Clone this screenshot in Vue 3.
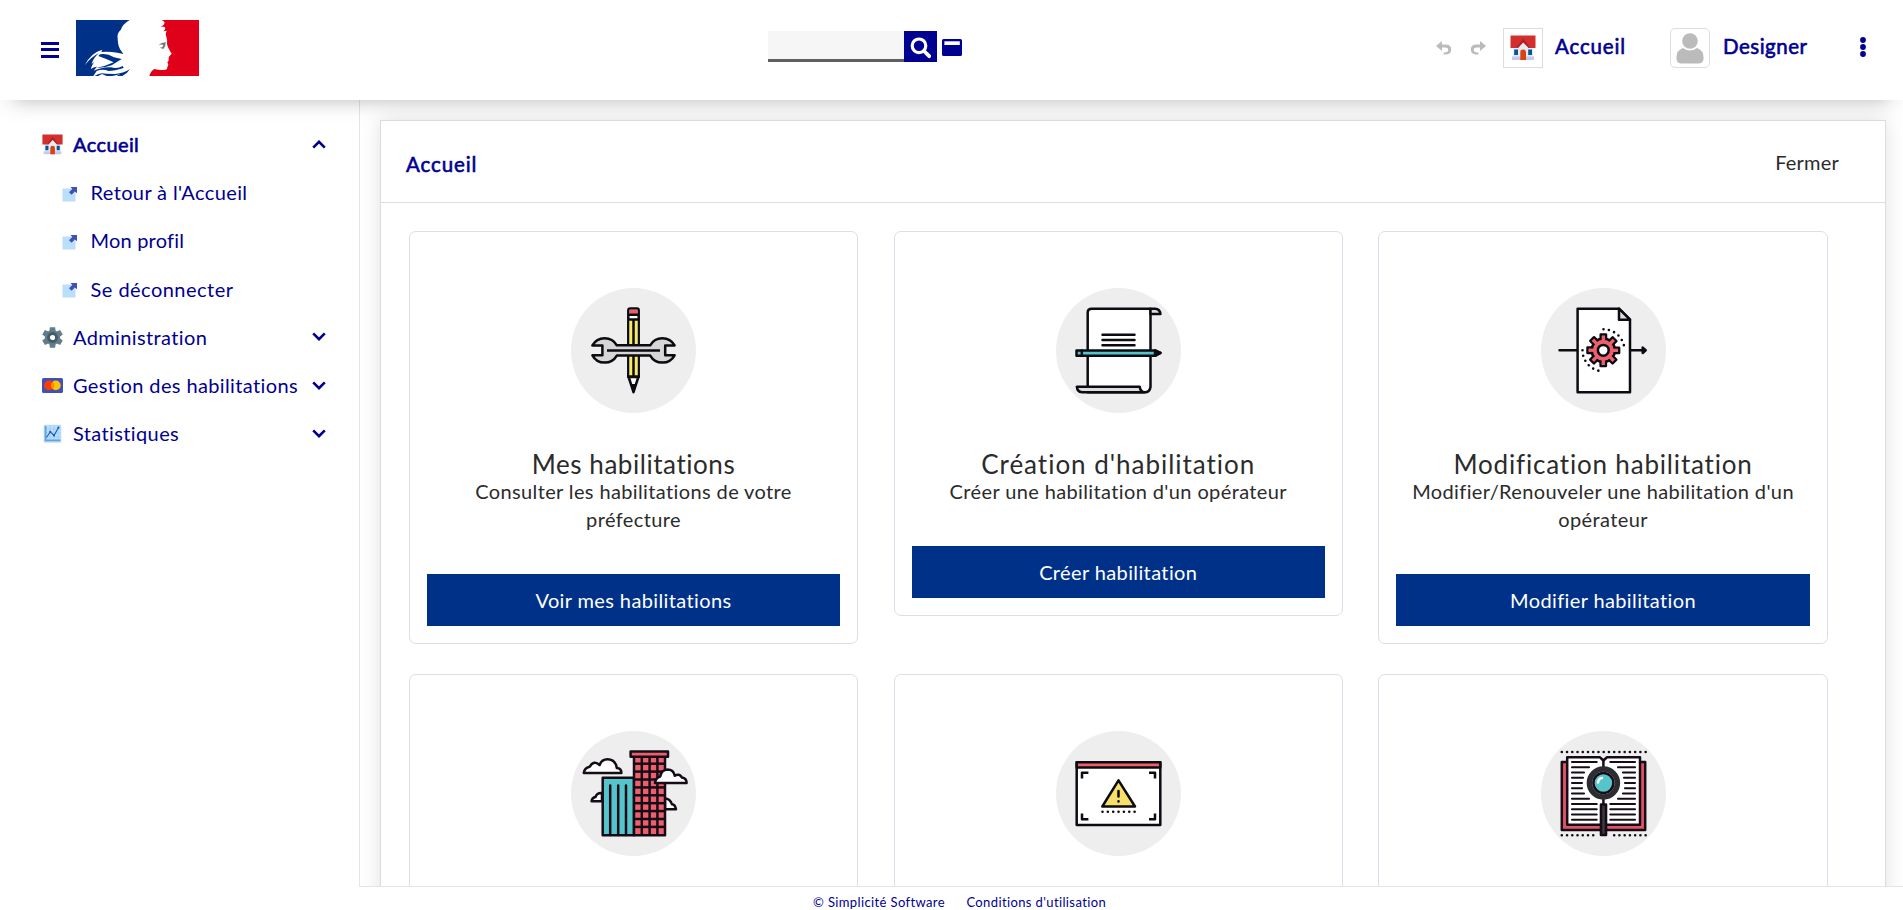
<script setup>
const subItems = [
  { label: "Retour à l'Accueil", cls: 's-retour' },
  { label: 'Mon profil', cls: 's-profil' },
  { label: 'Se déconnecter', cls: 's-deco' },
]
const menus = [
  { label: 'Administration', icon: 'gear' },
  { label: 'Gestion des habilitations', icon: 'card' },
  { label: 'Statistiques', icon: 'chart' },
]
const cards = [
  { icon: 'tools', title: 'Mes habilitations', size: 't1', text: 'Consulter les habilitations de votre préfecture', action: 'Voir mes habilitations' },
  { icon: 'scroll', title: "Création d'habilitation", size: 't2', text: "Créer une habilitation d'un opérateur", action: 'Créer habilitation' },
  { icon: 'process', title: 'Modification habilitation', size: 't3', text: "Modifier/Renouveler une habilitation d'un opérateur", action: 'Modifier habilitation' },
  { icon: 'city' },
  { icon: 'alert' },
  { icon: 'book' },
]
const gearTeeth = [0, 45, 90, 135, 180, 225, 270, 315]
const floors = [33.7, 41.6, 49.5, 57.4, 65.3, 73.2, 81.1, 89, 96.9]
const lines = [31, 36.2, 41.5, 46.7, 52, 57.2, 62.5, 67.7, 73, 78.2, 83.5, 88.7]
const leftEnds = [55.7, 48, 43, 42, 41, 41, 43, 48, 55.7, 55.7, 55.7, 55.7]
</script>

<template>
  <div class="app">
    <header class="top">
      <div class="brand">
        <div class="burger"><i></i><i></i><i></i></div>
        <svg class="logo" viewBox="228 60 369 168" preserveAspectRatio="none">
          <rect x="228" y="60" width="369" height="168" fill="#fff" />
          <path fill="#003189" d="M228 60H389Q368 72 362 90Q350 100 353 116Q354 142 364 153L370 162L352 158Q326 154 304 156L307 149Q274 157 254 196Q273 171 297 159Q280 173 275 192L283 186Q273 200 273 207Q279 201 291 200L281 212Q310 199 333 202Q353 207 368 198L371 204Q342 213 326 213Q307 206 290 213L280 228H228Z" />
          <path fill="#003189" d="M300 163Q320 158 342 172L365 177Q352 185 335 196Q311 205 290 203Q317 199 341 187Q318 176 295 168ZM284 228Q299 216 318 221L345 222Q374 219 390 207Q382 221 367 228H350L360 222Q340 230 320 228L306 222L294 228Z" />
          <path fill="#e1001a" d="M484 60H597V228H448Q452 213 463 207Q480 211 497 209Q503 207 502 201L505 194L502 187Q507 184 506 177Q505 170 509 168L515 161Q503 143 501 132Q503 120 497 102L500 92L490 94Q499 86 494 81L481 79Q492 77 494 68Q492 62 484 60Z" />
          <path fill="#777" d="M475 136Q485 126 498 127Q495 133 496 138L490 147L479 143Q489 143 490 135Q484 132 475 136Z" />
        </svg>
      </div>

      <div class="search">
        <div class="field"></div>
        <div class="go">
          <svg width="22" height="22" viewBox="0 0 22 22"><circle cx="9" cy="8.8" r="6.8" fill="none" stroke="#fff" stroke-width="3.2" /><path d="M14 14l5.2 5.2" stroke="#fff" stroke-width="3.8" stroke-linecap="round" /></svg>
        </div>
        <svg class="cardico" width="20" height="17" viewBox="0 0 20 17"><rect width="20" height="17" rx="1.6" fill="#000091" /><rect x="2.4" y="2.3" width="15.4" height="3.7" fill="#fff" /></svg>
      </div>

      <div class="tools">
        <svg class="undo" width="16" height="14" viewBox="0 0 16 14"><path fill="#bbb" d="M0 5L6 0V3.4H9.5Q15.2 3.4 15.2 8.3Q15.2 13.6 9 13.6L7.6 13.6V11.4Q12.4 11.6 12.2 9Q12.2 6.6 9 6.6H6V10Z" /></svg>
        <svg class="redo" width="16" height="14" viewBox="0 0 16 14"><path fill="#bbb" d="M16 5L10 0V3.4H6.5Q.8 3.4 .8 8.3Q.8 13.6 7 13.6L8.4 13.6V11.4Q3.6 11.6 3.8 9Q3.8 6.6 7 6.6H10V10Z" /></svg>
        <div class="frame">
          <svg width="26" height="26" viewBox="0 0 26 26">
            <use href="#house" />
          </svg>
        </div>
        <span class="toplabel tl-home">Accueil</span>
        <div class="frame rounded">
          <svg width="28" height="31" viewBox="0 0 28 31"><circle cx="14" cy="8" r="7.8" fill="#bbb" /><path fill="#bbb" d="M7 15Q14 20 21 15Q27.6 17 27.6 25Q27.6 30.4 23 30.4H5Q.4 30.4 .4 25Q.4 17 7 15Z" /></svg>
        </div>
        <span class="toplabel tl-user">Designer</span>
        <svg class="dots" width="6" height="20" viewBox="0 0 6 20"><g fill="#000091"><circle cx="3" cy="3" r="2.9" /><circle cx="3" cy="10" r="2.9" /><circle cx="3" cy="17" r="2.9" /></g></svg>
      </div>
    </header>

    <div class="body">
      <nav class="side">
        <div class="item active">
          <svg class="ico" width="21" height="21" viewBox="0 0 26 26">
            <g id="house">
              <path fill="#e8eaf6" d="M3 12L13 5L23 12V25H3Z" />
              <path fill="#c5cae9" d="M2 21.5H24V25H2Z" />
              <path fill="#d32f2f" d="M.5 .6H25.5V13H20.6L13.2 4.5L6 13H.5Z" />
              <path fill="#b71c1c" d="M13.2 3.5L20.8 13H18.6L13.2 7.5L8 13H5.8Z" />
              <path fill="#01579b" d="M4.2 14.5H8V20H4.2ZM18.2 14.5H22V20H18.2Z" />
              <path fill="#d84315" d="M10.3 25V17Q10.3 14.6 13.2 14.6Q16 14.6 16 17V25Z" />
            </g>
          </svg>
          <span class="label">Accueil</span>
          <svg class="chev" width="14" height="9" viewBox="0 0 14 9"><path d="M1.2 7.6L7 1.8L12.8 7.6" /></svg>
        </div>
        <div v-for="s in subItems" :key="s.label" class="item sub">
          <svg class="ico" width="16" height="16" viewBox="0 0 16 16"><path fill="#bbdefb" d="M.5 2.5H13.5V15.5H.5Z" /><path fill="#3f51b5" d="M8.5 1H15V7.3L12.8 5.4L9.6 8.8L7 6.3L10.3 3Z" /></svg>
          <span class="label" :class="s.cls">{{ s.label }}</span>
        </div>
        <div v-for="m in menus" :key="m.label" class="item">
          <svg v-if="m.icon === 'gear'" class="ico" width="21" height="21" viewBox="0 0 21 21">
            <g fill="#607d8b"><circle cx="10.5" cy="10.5" r="7.6" /><path v-for="a in [0, 60, 120, 180, 240, 300]" :key="a" :transform="`rotate(${a} 10.5 10.5)`" d="M7.9 0.2H13.1L13.6 4.5H7.4Z" /></g>
            <circle cx="10.5" cy="10.5" r="4" fill="#fff" stroke="#455a64" stroke-width="2.8" />
          </svg>
          <svg v-else-if="m.icon === 'card'" class="ico" width="21" height="21" viewBox="0 0 21 21">
            <rect y="3" width="21" height="15" rx="1.6" fill="#3f51b5" /><circle cx="13.8" cy="10.4" r="4.9" fill="#ffc107" /><circle cx="7" cy="10.4" r="4.9" fill="#ff3d00" /><path fill="#ff9800" d="M10.4 7A4.9 4.9 0 0 1 10.4 13.8A4.9 4.9 0 0 1 10.4 7Z" />
          </svg>
          <svg v-else class="ico" width="21" height="21" viewBox="0 0 21 21">
            <rect x="1.7" y="1.7" width="17.6" height="18" rx="1" fill="#bbdefb" /><path stroke="#90caf9" stroke-width=".6" d="M8 2V17M12 2V17M16 2V17M3 6H19M3 10H19M3 14H19" /><path fill="none" stroke="#64a0dc" stroke-width="1.8" d="M3.6 3V17.4H18.4" /><path fill="none" stroke="#1a5fb4" stroke-width="1.1" d="M4.5 14.5L8.3 8.8L12 12.5L16.5 4.5" /><g fill="#1a4f9e"><circle cx="8.3" cy="8.8" r="1" /><circle cx="12" cy="12.5" r="1" /><circle cx="16.5" cy="4.5" r="1" /></g>
          </svg>
          <span class="label">{{ m.label }}</span>
          <svg class="chev" width="14" height="9" viewBox="0 0 14 9"><path d="M1.2 1.4L7 7.2L12.8 1.4" /></svg>
        </div>
      </nav>

      <main class="work">
        <section class="panel">
          <div class="phead">
            <h1>Accueil</h1>
            <span class="close">Fermer</span>
          </div>
          <div class="grid">
            <article v-for="c in cards" :key="c.icon" class="card">
              <svg class="pic" width="125" height="125" viewBox="0 0 125 125">
                <circle cx="62.5" cy="62.5" r="62.5" fill="#eee" />
                <g v-if="c.icon === 'tools'" stroke="#0b0b12" stroke-width="2.5" stroke-linejoin="round">
                  <path fill="#fff" d="M57.3 88L62.5 104L67.7 88Z" />
                  <path fill="#0b0b12" stroke="none" d="M59.5 96H65.5L62.5 106Z" />
                  <path fill="#fff" d="M57.3 89V22.4Q57.3 20.4 59.3 20.4H66Q67.7 20.4 67.7 22.4V89Z" />
                  <path fill="#f25a68" stroke="none" d="M58.5 21.6H66.6V26H58.5Z" />
                  <path fill="#fbe964" stroke="none" d="M58.5 32H66.5V88H58.5Z" />
                  <path fill="none" d="M57 26.7H68M57 31.6H68M62.5 32V88.3M57 88.6H68" />
                  <path fill="#d6d6d6" d="M45.8 57.3H79.2A14 14 0 0 1 103.6 57.4H94.2V67.3H103.6A14 14 0 0 1 79.2 67.6H45.8A14 14 0 0 1 21.4 67.3H31.4V57.4H21.4A14 14 0 0 1 45.8 57.3Z" />
                  <path d="M36 62.4H89" />
                </g>
                <g v-else-if="c.icon === 'scroll'" stroke="#0b0b12" stroke-width="2.5" stroke-linejoin="round" stroke-linecap="round">
                  <path fill="#fff" d="M31.7 98.5V24.5Q31.7 20.7 35.8 20.7H94.5V99Q93.8 104.3 88.7 104.3H31.7Z" />
                  <path fill="#ddd" d="M94.5 25.9V20.7H99Q104 21 104.5 25.9Z" />
                  <path fill="#ddd" d="M20.8 98.7H83.7Q84.5 104.2 88.7 104.3H26Q21.3 104 20.8 98.7Z" />
                  <path d="M46.5 46.7H78.5M46.5 52H78.5M46.5 57.3H78.5" />
                  <path fill="#55c4cb" d="M20.5 62.4H99L104.5 65L99 67.8H20.5Z" />
                  <path fill="#0b0b12" d="M99 62.4L104.5 65L99 67.8ZM25.8 62.4V67.8" />
                </g>
                <g v-else-if="c.icon === 'process'" stroke="#0b0b12" stroke-width="2.5" stroke-linejoin="round" stroke-linecap="round" fill="none">
                  <path d="M18.5 62.3H36M90 62.3H102" /><path fill="#0b0b12" d="M101.7 59.6L104.7 62.3L101.7 65Z" />
                  <path fill="#fff" d="M36.6 20.7H78L89 31.7V104.3H36.6Z" /><path fill="#ddd" d="M78 20.7V31.7H89Z" />
                  <path stroke-width="2.6" stroke-dasharray="0 5.5" d="M62.5 41.3A21 21 0 0 1 83.5 62.3M41.5 62.3A21 21 0 0 0 62.5 83.3" />
                  <path v-for="a in gearTeeth" :key="a" :transform="`rotate(${a} 62.3 62.3)`" fill="#ec5f6b" d="M59.7 53V46.5H65V53" />
                  <circle cx="62.3" cy="62.3" r="11.7" fill="#ec5f6b" />
                  <path v-for="a in gearTeeth" :key="'f' + a" :transform="`rotate(${a} 62.3 62.3)`" stroke="none" fill="#ec5f6b" d="M60.7 54V47.6H64V54Z" />
                  <circle cx="62.3" cy="62.3" r="5.4" fill="#fff" />
                </g>
                <g v-else-if="c.icon === 'city'" stroke="#150c18" stroke-width="2.5" stroke-linejoin="round">
                  <path fill="#fff" d="M31 70.2H20.6Q21 66.5 24.5 66Q26 61.5 31 62Z" />
                  <path fill="#fff" d="M94 78.3H105Q104 73.4 101 73.3Q99 67.6 94 67.5Z" />
                  <path fill="#55c4cb" d="M31.7 46.7H63V104.3H31.7Z" />
                  <path fill="none" stroke-linecap="round" d="M39.2 54.5V104M47.2 54.5V104M55 54.5V104" />
                  <path fill="#ec5f6b" d="M63 25H94V104.3H63Z" />
                  <path fill="#ec5f6b" d="M59.6 20.6H97V25.8H59.6Z" />
                  <path fill="none" d="M70.8 26V104M78.6 26V104M86.4 26V104" />
                  <path v-for="f in floors" :key="f" :d="`M63 ${f - 1}H94`" />
                  <path fill="#fff" d="M12.8 42H50.4Q50.5 37.4 45.8 37Q44.4 28.2 36.5 28.2Q30.5 28.2 28.6 34Q23 28.5 18.6 35.8Q13.4 37 12.8 42Z" />
                  <path fill="#fff" d="M84 51.9H115.6Q115.5 47 111 46.5Q108 41.8 103.8 44.8Q102.5 38.5 96.4 38.5Q90.5 38.8 89.2 45.5Q84.4 47 84 51.9Z" />
                </g>
                <g v-else-if="c.icon === 'alert'" stroke="#0b0b12" stroke-width="2.5" stroke-linejoin="round" fill="none">
                  <path fill="#fff" d="M20.7 31.2H104.3V94H20.7Z" /><path fill="#ec5f6b" d="M20.7 31.2H104.3V36.6H20.7Z" />
                  <path d="M26 47.5V41.7H32.4M93 41.7H99V47.5M26 82.5V88.3H32.4M93 88.3H99V82.5" />
                  <path fill="#f8df6c" d="M62.5 49.3L79 75.5H46.3Z" /><path stroke-linecap="round" d="M62.5 60V65.6M62.5 70.2V70.4" />
                  <path stroke-width="2.6" stroke-linecap="round" stroke-dasharray="0 5.35" d="M46.5 80.7H79" />
                </g>
                <g v-else stroke="#150c18" stroke-width="2.5" stroke-linejoin="round" fill="none">
                  <path stroke-width="2.6" stroke-linecap="round" stroke-dasharray="0 5.24" d="M20.8 21H105M20.8 104.3H53M73.2 104.3H105" />
                  <path fill="#e05464" d="M20.8 31H104.2V99H20.8Z" />
                  <path fill="#fff" d="M26.2 26.3H59L62.4 29.5L66 26.3H99V93.8H26.2Z" /><path d="M62.4 29V99" />
                  <path v-for="(y, i) in lines" :key="y" stroke-width="2.1" stroke-linecap="round" :d="`M31 ${y}H${leftEnds[i]}M${125 - leftEnds[i]} ${y}H94`" />
                  <circle cx="62.4" cy="52" r="14" fill="#fff" stroke="#2c2c31" stroke-width="5.5" /><circle cx="62.4" cy="52" r="10" fill="#55c4cb" />
                  <path stroke="#fff" stroke-linecap="round" d="M57 51.5Q57.5 47.5 61 47" />
                  <path fill="#3b3b40" stroke-width="2.6" d="M60 73.5H65V104H60Z" />
                </g>
              </svg>
              <template v-if="c.title">
                <h2 :class="c.size">{{ c.title }}</h2>
                <p>{{ c.text }}</p>
                <div class="btn">{{ c.action }}</div>
              </template>
            </article>
          </div>
        </section>
      </main>
    </div>

    <footer class="foot">
      <span>© Simplicité Software</span>
      <span>Conditions d'utilisation</span>
    </footer>
  </div>
</template>

<style>
body {
  margin: 0;
  overflow: hidden;
  background: #fff;
}
</style>

<style scoped>
.app {
  height: 910px;
  display: flex;
  flex-direction: column;
  font-family: Lato, "Open Sans", sans-serif;
  font-size: 20px;
  letter-spacing: 0.38px;
  color: #000091;
  overflow: hidden;
}
.top {
  flex: none;
  height: 100px;
  position: relative;
  z-index: 2;
  background: #fff;
  display: grid;
  grid-template-columns: 768px 1fr auto;
  box-shadow: 0 8px 24px -4px rgba(0, 0, 0, 0.08), 0 16px 16px -16px rgba(0, 0, 0, 0.2);
}
.brand {
  display: flex;
  padding-left: 41px;
}
.burger {
  width: 18px;
  margin: 42px 17px 0 0;
  display: flex;
  flex-direction: column;
  gap: 3.5px;
}
.burger i {
  height: 2.9px;
  background: #000091;
}
.logo {
  width: 123px;
  height: 56px;
  margin-top: 20px;
}
.search {
  display: flex;
  padding-top: 31px;
}
.field {
  width: 136px;
  height: 28px;
  background: #f6f6f6;
  border-bottom: 3px solid #606060;
}
.go {
  width: 33px;
  height: 31px;
  background: #000091;
}
.go svg {
  display: block;
  margin: 6px 0 0 6px;
}
.cardico {
  margin: 8px 0 0 5px;
}
.tools {
  display: flex;
  padding-right: 37px;
}
.undo {
  margin: 41px 19px 0 0;
}
.redo {
  margin: 41px 17px 0 -1px;
}
.frame {
  box-sizing: border-box;
  width: 40px;
  height: 40px;
  margin-top: 28px;
  border: 1px solid #ddd;
  display: flex;
  align-items: center;
  justify-content: center;
}
.rounded {
  border-radius: 5px;
}
.toplabel {
  font-size: 20.5px;
  -webkit-text-stroke: 0.6px #000091;
  line-height: 24px;
  padding-top: 34px;
  white-space: nowrap;
}
.tl-home {
  letter-spacing: 0.85px;
  width: 115px;
  margin-left: 12px;
}
.tl-user {
  letter-spacing: 0.5px;
  width: 137px;
  margin-left: 13px;
}
.dots {
  margin-top: 37px;
}
.body {
  flex: none;
  height: 786px;
  display: flex;
}
.side {
  box-sizing: border-box;
  width: 360px;
  padding-top: 20.5px;
  border-right: 1px solid #e5e5e5;
}
.item {
  height: 48.2px;
  padding-left: 42px;
  display: flex;
  align-items: center;
}
.item .ico {
  flex: none;
  margin-right: 10px;
}
.label {
  flex: 1;
  white-space: nowrap;
  margin-top: -1px;
}
.item.sub {
  padding-left: 62px;
}
.item.sub .ico {
  margin-right: 12.5px;
  margin-top: 2px;
}
.active .label {
  -webkit-text-stroke: 0.6px #000091;
  letter-spacing: 0.4px;
}
.s-profil {
  letter-spacing: 0.2px;
}
.s-deco {
  letter-spacing: 0.47px;
}
.chev {
  margin-right: 33px;
  margin-top: -1px;
}
.chev path {
  fill: none;
  stroke: #000091;
  stroke-width: 2.6;
}
.work {
  flex: 1;
  overflow: hidden;
  padding: 20px 17px 0 20px;
}
.panel {
  height: 900px;
  background: #fff;
  border: 1px solid #ddd;
  box-shadow: 0 0 20px rgba(0, 0, 0, 0.12);
}
.phead {
  height: 81px;
  border-bottom: 1px solid #ddd;
  display: flex;
  align-items: center;
  justify-content: space-between;
  padding: 0 46px 0 25px;
}
h1 {
  margin: 4px 0 0;
  font-size: 20.5px;
  line-height: 24px;
  font-weight: 400;
  -webkit-text-stroke: 0.6px #000091;
  letter-spacing: 0.9px;
}
.close {
  color: #2b2b2b;
  margin-top: 1px;
  letter-spacing: 0.2px;
}
.grid {
  display: grid;
  grid-template-columns: repeat(3, 449.4px);
  column-gap: 35.4px;
  row-gap: 30px;
  align-items: start;
  padding: 28px 0 0 27.8px;
}
.card {
  box-sizing: border-box;
  border: 1px solid #dddde8;
  border-radius: 7px;
  padding: 56px 17px 17px;
  text-align: center;
  color: #2b2b2b;
  min-height: 300px;
}
.pic {
  display: block;
  margin: 0 auto 36px;
}
h2 {
  margin: 0;
  font-size: 26px;
  line-height: 30px;
  font-weight: 400;
}
.t1 {
  letter-spacing: 0.55px;
}
.t2 {
  letter-spacing: 0.98px;
}
.t3 {
  letter-spacing: 0.82px;
}
.card p {
  margin: -2px 0 41px;
  padding: 0 8px;
  line-height: 28px;
}
.btn {
  height: 52px;
  line-height: 53px;
  background: #003189;
  color: #fff;
}
.foot {
  flex: 1;
  margin-left: 359px;
  border-top: 1px solid #e5e5e5;
  display: flex;
  gap: 21.5px;
  padding-left: 454px;
  font-size: 13px;
  line-height: 30px;
  letter-spacing: 0.38px;
}
</style>
